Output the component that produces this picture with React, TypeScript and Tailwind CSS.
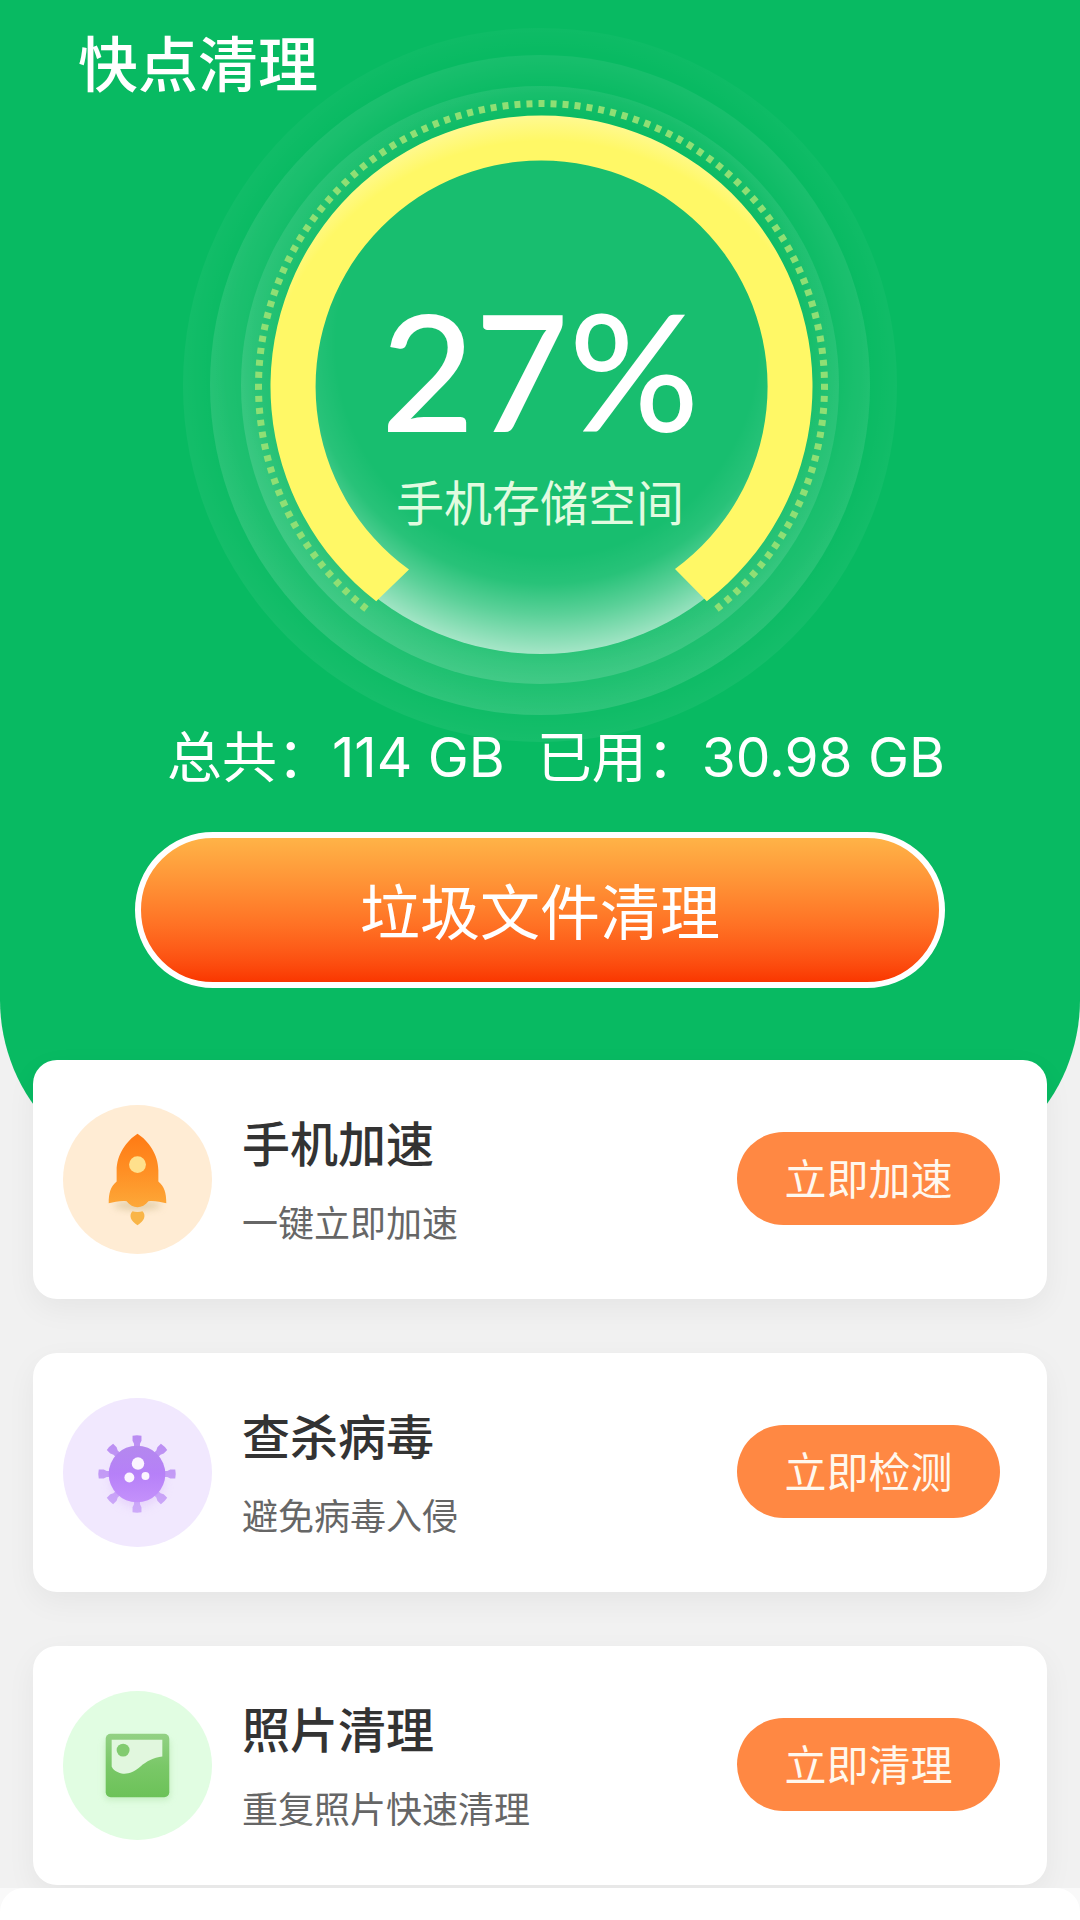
import React from "react";

const RocketIcon = () => (
  <svg viewBox="0 0 150 150" className="w-[149px] h-[149px] shrink-0" aria-hidden="true">
    <defs>
      <linearGradient id="rocketBody" x1="0" y1="0" x2="0" y2="1">
        <stop offset="0" stopColor="#ff7a14" />
        <stop offset="0.5" stopColor="#ff8f24" />
        <stop offset="1" stopColor="#fda838" />
      </linearGradient>
      <filter id="rocketShade" x="-50%" y="-50%" width="200%" height="200%">
        <feGaussianBlur stdDeviation="4" />
      </filter>
    </defs>
    <circle cx="75" cy="75" r="75" fill="#ffecd4" />
    <ellipse cx="75" cy="101" rx="24" ry="5" fill="#d9c49a" opacity="0.7" filter="url(#rocketShade)" />
    <path
      d="M75 29C64 36 54 50 54 66V77C48 82 46 88 46 99C52 98 58 96 64 97C67 101 71 103 75 103C79 103 83 101 86 97C92 96 98 98 104 99C104 88 102 82 96 77V66C96 50 86 36 75 29Z"
      fill="url(#rocketBody)"
    />
    <path d="M70 107C73 108 77 108 80 107C84 111 82 117 75 121C68 117 66 111 70 107Z" fill="#f9b548" />
    <circle cx="75" cy="60" r="8.5" fill="#ffe08c" />
  </svg>
);

const VirusIcon = () => (
  <svg viewBox="0 0 150 150" className="w-[149px] h-[149px] shrink-0" aria-hidden="true">
    <defs>
      <linearGradient id="virusBody" x1="0" y1="0" x2="0" y2="1">
        <stop offset="0" stopColor="#b488ee" />
        <stop offset="0.5" stopColor="#b680f8" />
        <stop offset="1" stopColor="#c491fb" />
      </linearGradient>
      <linearGradient id="virusArms" gradientUnits="userSpaceOnUse" x1="0" y1="37" x2="0" y2="116">
        <stop offset="0" stopColor="#b98bf2" />
        <stop offset="1" stopColor="#cdaaf9" />
      </linearGradient>
      <mask id="virusArmMask">
        {[0, 45, 90, 135, 180, 225, 270, 315].map((angle) => (
          <path
            key={angle}
            d="M70 38Q74.5 37 79 38V43L77.5 46V54H71.5V46L70 43Z"
            fill="#fff"
            transform={`rotate(${angle} 74.5 76.5)`}
          />
        ))}
      </mask>
      <filter id="virusShade" x="-50%" y="-50%" width="200%" height="200%">
        <feGaussianBlur stdDeviation="5" />
      </filter>
    </defs>
    <circle cx="75" cy="75" r="75" fill="#f1e8fe" />
    <circle cx="75" cy="83" r="27" fill="#dcc0f8" opacity="0.5" filter="url(#virusShade)" />
    <rect width="150" height="150" fill="url(#virusArms)" mask="url(#virusArmMask)" />
    <circle cx="74.5" cy="76.5" r="28.5" fill="url(#virusBody)" />
    <circle cx="75.5" cy="66" r="6.3" fill="#fbf4ff" />
    <circle cx="66.8" cy="80" r="5" fill="#fbf4ff" />
    <circle cx="83" cy="78.5" r="4" fill="#fbf4ff" />
  </svg>
);

const PhotoIcon = () => (
  <svg viewBox="0 0 150 150" className="w-[149px] h-[149px] shrink-0" aria-hidden="true">
    <defs>
      <linearGradient id="photoFrame" x1="0" y1="0" x2="0" y2="1">
        <stop offset="0" stopColor="#93d184" />
        <stop offset="0.5" stopColor="#7ac868" />
        <stop offset="1" stopColor="#6cc258" />
      </linearGradient>
      <filter id="photoShade" x="-30%" y="-30%" width="160%" height="160%">
        <feGaussianBlur stdDeviation="3" />
      </filter>
    </defs>
    <circle cx="75" cy="75" r="75" fill="#e1fde2" />
    <rect x="42" y="48" width="66" height="62" rx="5" fill="#b5e6ae" opacity="0.6" filter="url(#photoShade)" />
    <rect x="43" y="43" width="64" height="64" rx="5" fill="url(#photoFrame)" />
    <path d="M49 49H100V66C91 67 84 71 78 76C71 82 65 84 59 83C54 82 50 79 49 76Z" fill="#e1f7de" />
    <circle cx="60.5" cy="59.5" r="6.5" fill="#82cb70" />
  </svg>
);

const StorageGauge = () => (
  <svg viewBox="0 0 714 714" className="w-[714px] h-[714px] [grid-area:1/1]" aria-hidden="true">
    <defs>
      <radialGradient id="haloOuter" gradientUnits="userSpaceOnUse" cx="361" cy="342" r="373">
        <stop offset="0.85" stopColor="#fff" stopOpacity="0" />
        <stop offset="1" stopColor="#fff" stopOpacity="0.06" />
      </radialGradient>
      <radialGradient id="haloMiddle" gradientUnits="userSpaceOnUse" cx="365" cy="332" r="356">
        <stop offset="0.75" stopColor="#fff" stopOpacity="0" />
        <stop offset="0.86" stopColor="#fff" stopOpacity="0.07" />
        <stop offset="1" stopColor="#fff" stopOpacity="0.13" />
      </radialGradient>
      <radialGradient id="haloInner" gradientUnits="userSpaceOnUse" cx="369" cy="325" r="333">
        <stop offset="0.7" stopColor="#fff" stopOpacity="0" />
        <stop offset="0.8" stopColor="#fff" stopOpacity="0.08" />
        <stop offset="0.9" stopColor="#fff" stopOpacity="0.1" />
        <stop offset="1" stopColor="#fff" stopOpacity="0.16" />
      </radialGradient>
      <radialGradient id="dialGlow" gradientUnits="userSpaceOnUse" cx="364" cy="317" r="310">
        <stop offset="0.68" stopColor="#fff" stopOpacity="0" />
        <stop offset="0.77" stopColor="#fff" stopOpacity="0.07" />
        <stop offset="0.87" stopColor="#fff" stopOpacity="0.29" />
        <stop offset="1" stopColor="#fff" stopOpacity="0.62" />
      </radialGradient>
      <radialGradient id="ringColor" gradientUnits="userSpaceOnUse" cx="362" cy="398" r="310">
        <stop offset="0.92" stopColor="#fff866" />
        <stop offset="1" stopColor="#fff990" />
      </radialGradient>
    </defs>
    <circle cx="357" cy="357" r="357" fill="url(#haloOuter)" />
    <circle cx="357" cy="357" r="330" fill="url(#haloMiddle)" />
    <circle cx="357" cy="357" r="299" fill="url(#haloInner)" />
    <circle cx="358" cy="357" r="269" fill="#18be6f" />
    <circle cx="358" cy="357" r="269" fill="url(#dialGlow)" />
    <path
      d="M183.5 580.9A283 283 0 1 1 533.5 580.9"
      pathLength={1398}
      fill="none"
      stroke="#8fdf74"
      strokeWidth="7"
      strokeDasharray="6 6"
    />
    <path
      d="M193.2 573.2A271 271 0 1 1 523.8 573.2L492 541A226 226 0 1 0 226 541.6Z"
      fill="url(#ringColor)"
    />
  </svg>
);

const tools = [
  { title: "手机加速", desc: "一键立即加速", action: "立即加速", Icon: RocketIcon },
  { title: "查杀病毒", desc: "避免病毒入侵", action: "立即检测", Icon: VirusIcon },
  { title: "照片清理", desc: "重复照片快速清理", action: "立即清理", Icon: PhotoIcon },
];

function App() {
  return (
    <div className="min-h-screen flex flex-col bg-[#f1f1f1] font-['Noto_Sans_CJK_SC',sans-serif]">
      {/* Header */}
      <header className="bg-[#08ba62] rounded-b-[180px] pb-48 flex flex-col items-center text-white">
        <div className="grid w-full pt-7">
          <h1 className="[grid-area:1/1] pl-[78px] text-[60px] leading-[66px] font-medium">快点清理</h1>
          <div className="[grid-area:1/1] grid justify-items-center">
            <StorageGauge />
            <div className="[grid-area:1/1] flex flex-col items-center pt-[246px]">
              <p className="font-['Lato',sans-serif] text-[162px] leading-[192px] font-medium">27%</p>
              <p className="text-[48px] leading-[68px] text-[#e2fbe0]">手机存储空间</p>
            </div>
          </div>
        </div>

        <div className="-mt-6 pl-8 flex justify-center gap-8 font-['Inter','Noto_Sans_CJK_SC',sans-serif] text-[55px] leading-[78px]">
          <p>总共：114 GB</p>
          <p>已用：30.98 GB</p>
        </div>

        <button className="mt-9 pb-0.5 w-3/4 h-[156px] rounded-full border-6 border-white bg-linear-to-b from-[#ffb347] to-[#fa3600] text-[60px]">
          垃圾文件清理
        </button>
      </header>

      {/* Tools */}
      <main className="-mt-[120px] px-[33px] flex flex-col gap-[54px]">
        {tools.map(({ title, desc, action, Icon }) => (
          <section
            key={title}
            className="flex items-center h-[239px] pl-[30px] pr-[47px] rounded-[24px] bg-white shadow-[0_10px_30px_rgba(0,0,0,0.05)]"
          >
            <Icon />
            <div className="flex-1 pt-0.5 pl-[30px]">
              <h2 className="text-[48px] leading-[72px] font-medium text-[#333]">{title}</h2>
              <p className="mt-2 text-[36px] leading-[72px] text-[#666]">{desc}</p>
            </div>
            <button className="w-[263px] h-[93px] mb-0.5 pb-1 rounded-full bg-[#ff8843] text-[42px] text-[#fff8ee]">
              {action}
            </button>
          </section>
        ))}
      </main>

      {/* Bottom sheet */}
      <div className="relative mt-[3px] flex-1 flex bg-[#f9f9f9]">
        <div className="flex-1 min-h-8 rounded-t-[24px] bg-white" />
      </div>
    </div>
  );
}

export default App;
